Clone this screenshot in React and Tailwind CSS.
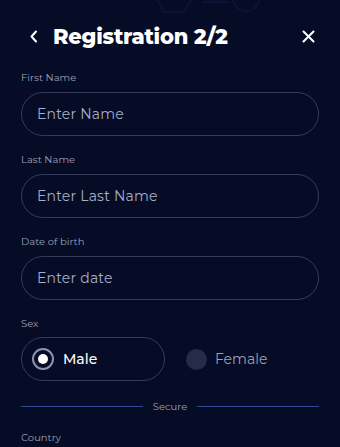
import React, { useState } from 'react';

const font = { fontFamily: '"Montserrat", "Open Sans", "Liberation Sans", sans-serif' };

const Field = ({ label, placeholder }) => (
  <div className="flex flex-col">
    <label className="text-[10px] leading-[14px] text-[#9ba1b8] mb-[7px]">{label}</label>
    <div className="h-[44px] rounded-full border border-[#363c5c] flex items-center px-[15px]">
      <span className="text-[14px] text-[#a7aec6] tracking-[0.2px]">{placeholder}</span>
    </div>
  </div>
);

export default function App() {
  const [sex, setSex] = useState('male');

  return (
    <div className="relative w-[340px] h-[447px] overflow-hidden bg-[#060b26] text-white" style={font}>
      {/* faint logo behind header */}
      <svg className="absolute left-[140px] top-0" width="130" height="20" viewBox="0 0 130 20" fill="none">
        <path d="M15 -4 L24 12 L44 12 L52 -2" stroke="#0c1338" strokeWidth="2" />
        <path d="M62 2 L88 2" stroke="#0c1338" strokeWidth="2" />
        <circle cx="106" cy="-2" r="13" stroke="#0c1338" strokeWidth="2" />
      </svg>

      <div className="relative flex items-center h-[71px] pt-[2px] pl-[26px] pr-[24px]">
        <button className="w-[14px] h-[20px] flex items-center justify-center mr-[13px]">
          <svg width="9" height="13" viewBox="0 0 9 13" fill="none">
            <path d="M7 1.5 L2.5 6.5 L7 11.5" stroke="white" strokeWidth="2" strokeLinecap="round" strokeLinejoin="round" />
          </svg>
        </button>
        <h1 className="text-[21px] font-extrabold tracking-[-0.2px] leading-none flex-1">Registration 2/2</h1>
        <button className="w-[16px] h-[16px] flex items-center justify-center">
          <svg width="13" height="13" viewBox="0 0 13 13" fill="none">
            <path d="M1.5 1.5 L11.5 11.5 M11.5 1.5 L1.5 11.5" stroke="white" strokeWidth="2" strokeLinecap="round" />
          </svg>
        </button>
      </div>

      <div className="px-[21px] flex flex-col gap-[17px]">
        <Field label="First Name" placeholder="Enter Name" />
        <Field label="Last Name" placeholder="Enter Last Name" />
        <Field label="Date of birth" placeholder="Enter date" />

        <div className="flex flex-col">
          <label className="text-[10px] leading-[14px] text-[#9ba1b8] mb-[6px]">Sex</label>
          <div className="flex items-center">
            <button
              onClick={() => setSex('male')}
              className="w-[144px] h-[44px] rounded-full border border-[#363c5c] flex items-center pl-[10px] gap-[9px]"
            >
              <span className="w-[22px] h-[22px] rounded-full border-2 border-[#8d93aa] flex items-center justify-center">
                <span className="w-[10px] h-[10px] rounded-full bg-white" />
              </span>
              <span className="text-[14px] text-white font-medium">Male</span>
            </button>
            <button onClick={() => setSex('female')} className="flex items-center ml-[21px] gap-[8px]">
              <span className="w-[21px] h-[21px] rounded-full bg-[#262b4a]" />
              <span className="text-[14px] text-[#9ba1b8]">Female</span>
            </button>
          </div>
        </div>
      </div>

      <div className="px-[21px] mt-[18px] flex items-center">
        <div className="flex-1 h-px bg-[#34479a]" />
        <span className="text-[10px] text-[#9ba1b8] px-[10px]">Secure</span>
        <div className="flex-1 h-px bg-[#34479a]" />
      </div>

      <div className="px-[21px] mt-[15px] leading-[14px]">
        <label className="text-[10px] text-[#9ba1b8]">Country</label>
      </div>
    </div>
  );
}
